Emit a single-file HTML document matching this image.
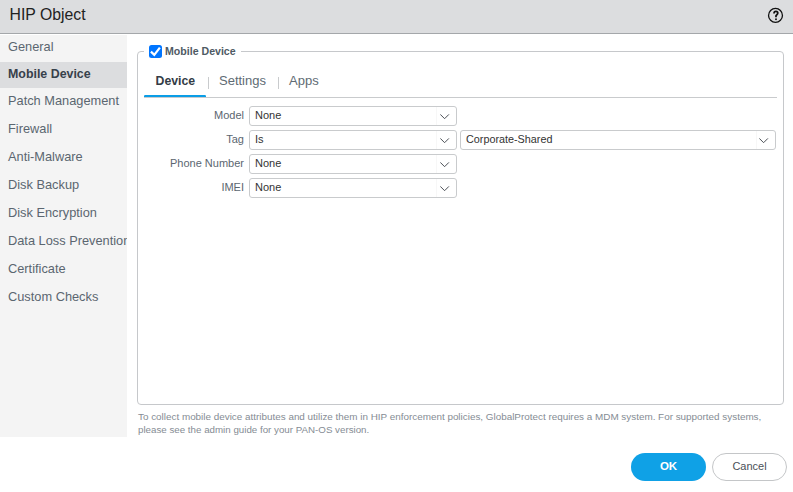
<!DOCTYPE html>
<html><head><meta charset="utf-8">
<style>
*{box-sizing:border-box;margin:0;padding:0}
html,body{width:793px;height:492px;overflow:hidden;background:#fff;font-family:"Liberation Sans",sans-serif;position:relative}
.abs{position:absolute;white-space:nowrap}
#hdr{position:absolute;left:0;top:0;width:793px;height:34px;background:#dcdddf;border-bottom:1px solid #a4a7aa}
#title{left:9.5px;top:6.2px;font-size:15.8px;color:#222;line-height:18px}
#side{position:absolute;left:0;top:35px;width:127px;height:402px;background:#f4f4f4;overflow:hidden}
.si{position:absolute;left:8px;font-size:12.8px;color:#5b6670;line-height:16px;white-space:nowrap}
#sel{position:absolute;left:0;top:27px;width:127px;height:26px;background:#dcdddf}
#fs{position:absolute;left:137px;top:51px;width:647px;height:354px;border:1px solid #c6c8cb;border-radius:4px}
#legbg{position:absolute;left:144px;top:42px;width:97px;height:18px;background:#fff}
#cb{position:absolute;left:149px;top:45px;width:13px;height:13px;background:#0075ff;border-radius:2.5px}
#legt{left:165px;top:45px;font-size:10.6px;font-weight:bold;color:#4e5a64;line-height:13px}
.tab{position:absolute;font-size:13px;color:#606b74;line-height:16px;white-space:nowrap;top:73px}
.sep{position:absolute;top:77px;width:1px;height:12px;background:#c9cbcd}
#tline{position:absolute;left:144px;top:97px;width:633px;height:1px;background:#c9cbcd}
#tblue{position:absolute;left:144px;top:94.6px;width:62px;height:2.4px;background:#0a9de6;border-radius:1.2px 1.2px 0 0}
.lbl{position:absolute;font-size:11px;color:#5b6670;line-height:13px;text-align:right;white-space:nowrap;right:549px}
.selbox{position:absolute;height:20px;border:1px solid #c9cbcd;border-radius:3px;background:#fff}
.selbox .v{position:absolute;left:5px;top:2px;font-size:11px;color:#333;line-height:13px;white-space:nowrap}
.selbox .dv{position:absolute;top:0;width:1px;height:18px;background:#f7f7f7}
.selbox svg{position:absolute;top:7px}
#note{left:138px;top:410px;font-size:9.8px;color:#858c94;line-height:13px;white-space:normal;width:650px}
#ok{position:absolute;left:631px;top:453px;width:75px;height:28px;border-radius:14px;background:#0fa1e6;color:#fff;font-weight:bold;font-size:11.5px;text-align:center;line-height:27px}
#cancel{position:absolute;left:712px;top:453px;width:75px;height:28px;border-radius:14px;border:1px solid #c4c6c8;background:#fff;color:#4a5058;font-size:11px;text-align:center;line-height:24.5px}
</style></head><body>
<div id="hdr"></div>
<div id="title" class="abs">HIP Object</div>
<svg id="help" width="30" height="30" viewBox="0 0 30 30" style="position:absolute;left:760px;top:0"><circle cx="15.5" cy="15.4" r="6.95" fill="none" stroke="#111" stroke-width="1.3"/><path d="M14.0 13.4 C14.0 12.0 14.9 11.3 15.9 11.3 C17.0 11.3 17.8 12.0 17.8 13.1 C17.8 14.3 16.6 14.8 16.0 15.7 L16.0 17.3" fill="none" stroke="#111" stroke-width="1.75"/><circle cx="16" cy="19.3" r="0.95" fill="#111"/></svg>

<div id="side">
  <div id="sel"></div>
  <div class="si" style="top:4px">General</div>
  <div class="si" style="top:31px;font-weight:bold;color:#37414b;font-size:12.4px">Mobile Device</div>
  <div class="si" style="top:58px">Patch Management</div>
  <div class="si" style="top:86px">Firewall</div>
  <div class="si" style="top:114px">Anti-Malware</div>
  <div class="si" style="top:142px">Disk Backup</div>
  <div class="si" style="top:170px">Disk Encryption</div>
  <div class="si" style="top:198px">Data Loss Prevention</div>
  <div class="si" style="top:226px">Certificate</div>
  <div class="si" style="top:254px">Custom Checks</div>
</div>

<div id="fs"></div>
<div id="legbg"></div>
<div id="cb"><svg width="13" height="13" viewBox="0 0 13 13"><path d="M2.7 6.4 L5.3 8.9 L10.2 2.5" fill="none" stroke="#fff" stroke-width="2.2" stroke-linecap="square"/></svg></div>
<div id="legt" class="abs">Mobile Device</div>

<div class="tab" style="left:155.5px;font-weight:bold;color:#333c46;font-size:12.3px">Device</div>
<div class="sep" style="left:208px"></div>
<div class="tab" style="left:219px">Settings</div>
<div class="sep" style="left:278px"></div>
<div class="tab" style="left:289px">Apps</div>
<div id="tline"></div>
<div id="tblue"></div>

<div class="lbl" style="top:109px">Model</div>
<div class="lbl" style="top:133px">Tag</div>
<div class="lbl" style="top:157px">Phone Number</div>
<div class="lbl" style="top:181px">IMEI</div>

<div class="selbox" style="left:249px;top:106px;width:208px"><span class="v">None</span><div class="dv" style="left:186px"></div><svg style="left:190px" width="10" height="6" viewBox="0 0 10 6"><path d="M0.3 0.4 L4.6 4.7 L8.9 0.4" fill="none" stroke="#4a4f55" stroke-width="1"/></svg></div>
<div class="selbox" style="left:249px;top:130px;width:208px"><span class="v">Is</span><div class="dv" style="left:186px"></div><svg style="left:190px" width="10" height="6" viewBox="0 0 10 6"><path d="M0.3 0.4 L4.6 4.7 L8.9 0.4" fill="none" stroke="#4a4f55" stroke-width="1"/></svg></div>
<div class="selbox" style="left:460px;top:130px;width:316px"><span class="v" style="font-size:10.8px">Corporate-Shared</span><div class="dv" style="left:295px"></div><svg style="left:298px" width="10" height="6" viewBox="0 0 10 6"><path d="M0.3 0.4 L4.6 4.7 L8.9 0.4" fill="none" stroke="#4a4f55" stroke-width="1"/></svg></div>
<div class="selbox" style="left:249px;top:154px;width:208px"><span class="v">None</span><div class="dv" style="left:186px"></div><svg style="left:190px" width="10" height="6" viewBox="0 0 10 6"><path d="M0.3 0.4 L4.6 4.7 L8.9 0.4" fill="none" stroke="#4a4f55" stroke-width="1"/></svg></div>
<div class="selbox" style="left:249px;top:178px;width:208px"><span class="v">None</span><div class="dv" style="left:186px"></div><svg style="left:190px" width="10" height="6" viewBox="0 0 10 6"><path d="M0.3 0.4 L4.6 4.7 L8.9 0.4" fill="none" stroke="#4a4f55" stroke-width="1"/></svg></div>

<div id="note" class="abs"><div style="font-size:9.89px">To collect mobile device attributes and utilize them in HIP enforcement policies, GlobalProtect requires a MDM system. For supported systems,</div><div style="font-size:9.75px">please see the admin guide for your PAN-OS version.</div></div>

<div id="ok">OK</div>
<div id="cancel">Cancel</div>
</body></html>
